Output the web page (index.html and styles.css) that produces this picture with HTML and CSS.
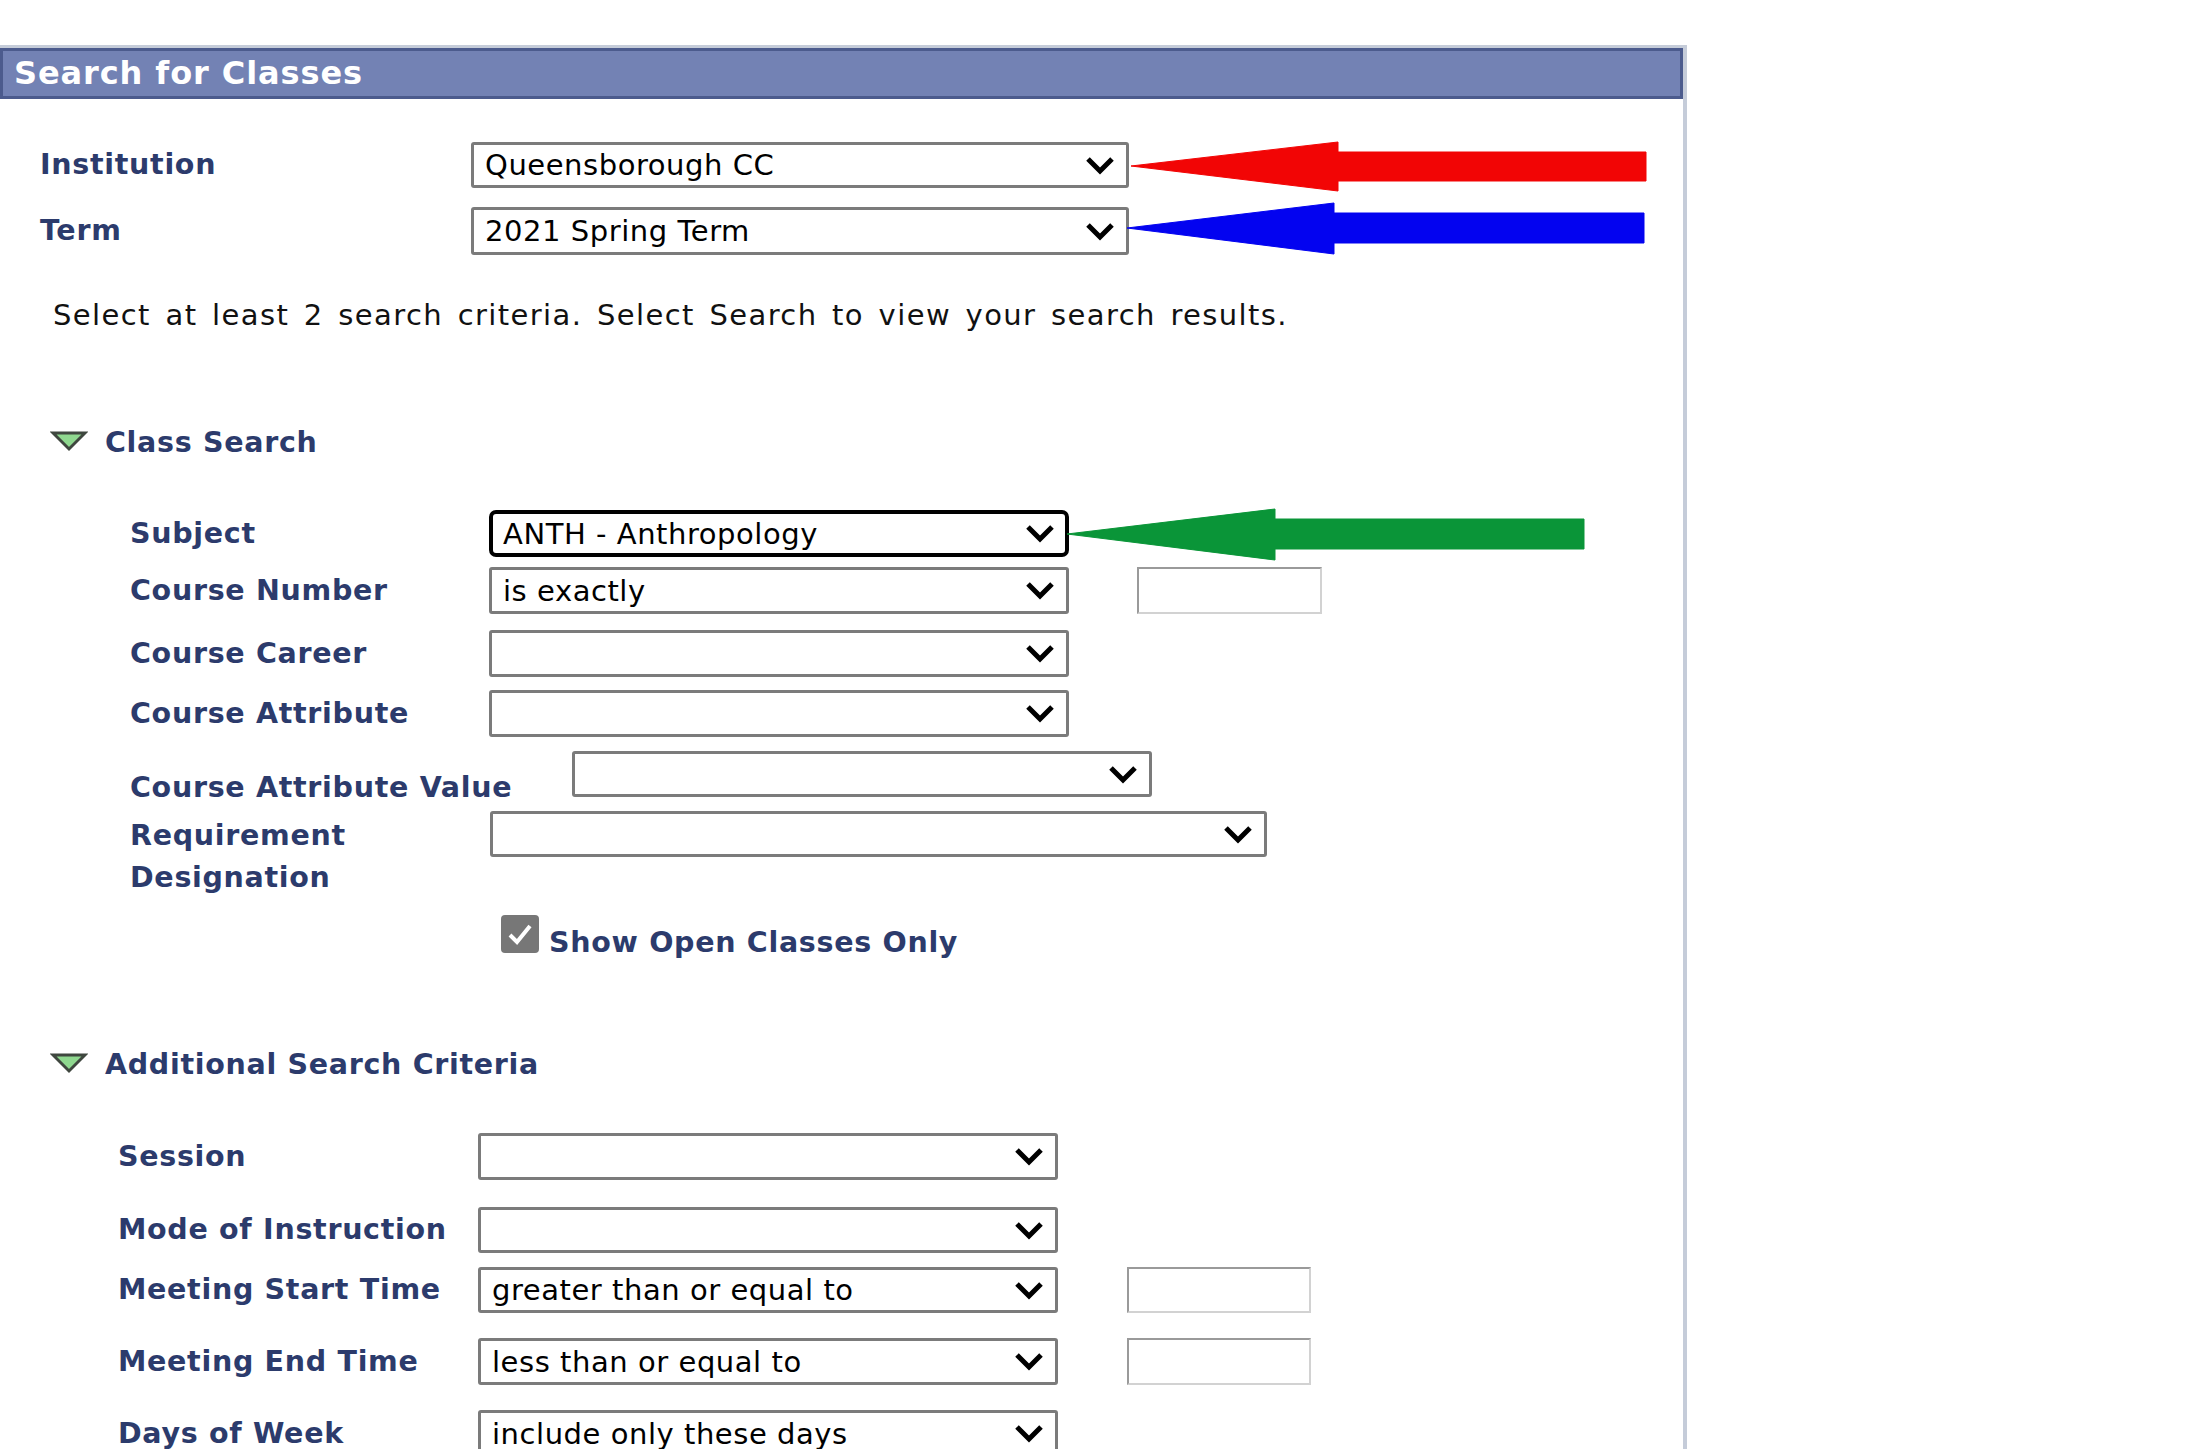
FILE: index.html
```html
<!DOCTYPE html>
<html lang="en">
<head>
<meta charset="utf-8">
<title>Search for Classes</title>
<link rel="stylesheet" href="styles.css">
</head>
<body>
<div class="page">
  <div class="panel">
    <div class="hdr">Search for Classes</div>

    <div class="form-top">
      <div class="row r-inst">
        <span class="lbl">Institution</span>
        <div class="sel sel-wide"><span class="val">Queensborough CC</span><svg class="chev" viewBox="0 0 30 19" width="30" height="19"><polyline points="3,3 15,15 27,3" /></svg></div>
      </div>
      <div class="row r-term">
        <span class="lbl">Term</span>
        <div class="sel sel-wide"><span class="val">2021 Spring Term</span><svg class="chev" viewBox="0 0 30 19" width="30" height="19"><polyline points="3,3 15,15 27,3" /></svg></div>
      </div>
    </div>

    <p class="info">Select at least 2 search criteria. Select Search to view your search results.</p>

    <div class="sec-head sec-class">
      <svg class="tri" viewBox="0 0 38 22" width="38" height="22"><polygon points="3,3 35,3 19,19" /></svg>
      <span>Class Search</span>
    </div>

    <div class="group g1">
      <div class="row r-subj">
        <span class="lbl">Subject</span>
        <div class="sel sel-focus"><span class="val">ANTH - Anthropology</span><svg class="chev" viewBox="0 0 30 19" width="30" height="19"><polyline points="3,3 15,15 27,3" /></svg></div>
      </div>
      <div class="row r-cnum">
        <span class="lbl">Course Number</span>
        <div class="sel"><span class="val">is exactly</span><svg class="chev" viewBox="0 0 30 19" width="30" height="19"><polyline points="3,3 15,15 27,3" /></svg></div>
        <div class="txt txt-1"></div>
      </div>
      <div class="row r-ccar">
        <span class="lbl">Course Career</span>
        <div class="sel"><span class="val"></span><svg class="chev" viewBox="0 0 30 19" width="30" height="19"><polyline points="3,3 15,15 27,3" /></svg></div>
      </div>
      <div class="row r-catt">
        <span class="lbl">Course Attribute</span>
        <div class="sel"><span class="val"></span><svg class="chev" viewBox="0 0 30 19" width="30" height="19"><polyline points="3,3 15,15 27,3" /></svg></div>
      </div>
      <div class="row r-cav">
        <span class="lbl lbl-cav">Course Attribute Value</span>
        <div class="sel"><span class="val"></span><svg class="chev" viewBox="0 0 30 19" width="30" height="19"><polyline points="3,3 15,15 27,3" /></svg></div>
      </div>
      <div class="row r-req">
        <span class="lbl lbl-req">Requirement<br>Designation</span>
        <div class="sel sel-req"><span class="val"></span><svg class="chev" viewBox="0 0 30 19" width="30" height="19"><polyline points="3,3 15,15 27,3" /></svg></div>
      </div>
    </div>

    <div class="chk-row">
      <span class="chk"><svg viewBox="0 0 38 38" width="38" height="38"><polyline points="9,20 16,27 29,11" /></svg></span>
      <span class="chk-lbl">Show Open Classes Only</span>
    </div>

    <div class="sec-head sec-add">
      <svg class="tri" viewBox="0 0 38 22" width="38" height="22"><polygon points="3,3 35,3 19,19" /></svg>
      <span>Additional Search Criteria</span>
    </div>

    <div class="group g2">
      <div class="row r-sess">
        <span class="lbl">Session</span>
        <div class="sel"><span class="val"></span><svg class="chev" viewBox="0 0 30 19" width="30" height="19"><polyline points="3,3 15,15 27,3" /></svg></div>
      </div>
      <div class="row r-mode">
        <span class="lbl">Mode of Instruction</span>
        <div class="sel"><span class="val"></span><svg class="chev" viewBox="0 0 30 19" width="30" height="19"><polyline points="3,3 15,15 27,3" /></svg></div>
      </div>
      <div class="row r-start">
        <span class="lbl">Meeting Start Time</span>
        <div class="sel"><span class="val">greater than or equal to</span><svg class="chev" viewBox="0 0 30 19" width="30" height="19"><polyline points="3,3 15,15 27,3" /></svg></div>
        <div class="txt txt-2"></div>
      </div>
      <div class="row r-end">
        <span class="lbl">Meeting End Time</span>
        <div class="sel"><span class="val">less than or equal to</span><svg class="chev" viewBox="0 0 30 19" width="30" height="19"><polyline points="3,3 15,15 27,3" /></svg></div>
        <div class="txt txt-2"></div>
      </div>
      <div class="row r-days">
        <span class="lbl">Days of Week</span>
        <div class="sel"><span class="val">include only these days</span><svg class="chev" viewBox="0 0 30 19" width="30" height="19"><polyline points="3,3 15,15 27,3" /></svg></div>
      </div>
    </div>
  </div>

  <svg class="annot" viewBox="0 0 2199 1449" width="2199" height="1449">
    <polygon class="a-red" points="1131,166 1338,142 1338,152 1646,152 1646,181 1338,181 1338,191" />
    <polygon class="a-blue" points="1127,228 1334,203 1334,213 1644,213 1644,243 1334,243 1334,254" />
    <polygon class="a-green" points="1067,534 1275,509 1275,519 1584,519 1584,549 1275,549 1275,560" />
  </svg>
</div>
</body>
</html>
```

FILE: styles.css
```css
html, body {
  margin: 0;
  padding: 0;
  background: #ffffff;
  height: 1449px;
  overflow: hidden;
}

body {
  font-family: "DejaVu Sans", Verdana, sans-serif;
  color: #000;
}

.page {
  position: relative;
  box-sizing: border-box;
  width: 2199px;
  height: 1449px;
  padding-top: 45px;
}

.panel {
  width: 1683px;
  height: 1401px;
  border-top: 3px solid #c5ccd9;
  border-right: 4px solid #c5ccd9;
}

.hdr {
  box-sizing: border-box;
  height: 51px;
  border: 3px solid #4c5b8d;
  background: #7382b4;
  color: #ffffff;
  font-weight: bold;
  font-size: 32px;
  line-height: 45px;
  padding-left: 11px;
  letter-spacing: 0.9px;
}

.row {
  display: flex;
  align-items: center;
  height: 47px;
}

.lbl {
  flex: none;
  color: #2c3b6c;
  font-weight: bold;
  font-size: 28.5px;
  line-height: 36px;
  letter-spacing: 0.7px;
  white-space: nowrap;
}

.sel {
  box-sizing: border-box;
  flex: none;
  position: relative;
  display: flex;
  align-items: center;
  width: 580px;
  height: 100%;
  border: 3px solid #7b7b7b;
  border-radius: 3px;
  background: #fff;
  padding-left: 11px;
}

.sel .val {
  flex: 1;
  font-size: 29px;
  line-height: 36px;
  letter-spacing: 0.55px;
  color: #000;
  white-space: nowrap;
}

.chev {
  flex: none;
  margin-right: 11px;
}

.chev polyline {
  fill: none;
  stroke: #000;
  stroke-width: 5;
}

.txt {
  box-sizing: border-box;
  flex: none;
  height: 100%;
  border-top: 2px solid #9a9a9a;
  border-left: 2px solid #9a9a9a;
  border-bottom: 2px solid #d2d2d2;
  border-right: 2px solid #d2d2d2;
  background: #fff;
}

.txt-1 {
  width: 185px;
  margin-left: 68px;
}

.txt-2 {
  width: 184px;
  margin-left: 69px;
}

/* top form */
.form-top {
  padding-left: 40px;
  margin-top: 43px;
}

.form-top .lbl {
  width: 431px;
}

.sel-wide {
  width: 658px;
}

.r-inst {
  height: 46px;
}

.r-term {
  margin-top: 19px;
  height: 48px;
}

.info {
  margin: 42px 0 0 0;
  padding-left: 53px;
  font-size: 29px;
  line-height: 36px;
  letter-spacing: 1.4px;
  word-spacing: 4px;
  color: #111;
}

/* section headings */
.sec-head {
  display: flex;
  align-items: center;
  height: 36px;
  padding-left: 50px;
  color: #2c3b6c;
  font-weight: bold;
  font-size: 28.5px;
  line-height: 36px;
  letter-spacing: 0.7px;
}

.sec-head .tri {
  flex: none;
  margin-right: 17px;
  margin-bottom: 5px;
}

.tri polygon {
  fill: #8fd88f;
  stroke: #3f473f;
  stroke-width: 3;
  stroke-linejoin: miter;
}

.sec-class {
  margin-top: 92px;
}

.sec-add {
  margin-top: 86px;
}

/* group 1 */
.g1 {
  padding-left: 130px;
  margin-top: 49px;
}

.g1 .lbl {
  width: 359px;
}

.sel-focus {
  border: 4px solid #000;
  border-radius: 7px;
  padding-left: 10px;
}

.sel-focus .chev {
  margin-right: 10px;
}

.r-cnum {
  margin-top: 10px;
}

.r-ccar {
  margin-top: 16px;
}

.r-catt {
  margin-top: 13px;
}

.r-cav {
  margin-top: 14px;
  height: 46px;
  align-items: flex-start;
}

.g1 .lbl-cav {
  width: 442px;
  margin-top: 19px;
}

.r-req {
  margin-top: 14px;
  height: 88px;
  align-items: flex-start;
}

.g1 .lbl-req {
  width: 360px;
  line-height: 42px;
  margin-top: 4px;
}

.sel-req {
  width: 777px;
  height: 46px;
}

/* checkbox */
.chk-row {
  display: flex;
  align-items: flex-end;
  height: 46px;
  margin-top: 16px;
  padding-left: 501px;
}

.chk {
  flex: none;
  width: 38px;
  height: 38px;
  border-radius: 4px;
  background: #777777;
  margin-bottom: 8px;
  margin-right: 10px;
}

.chk svg {
  display: block;
}

.chk polyline {
  fill: none;
  stroke: #ffffff;
  stroke-width: 4;
}

.chk-lbl {
  color: #2c3b6c;
  font-weight: bold;
  font-size: 28.5px;
  line-height: 36px;
  letter-spacing: 0.7px;
}

/* group 2 */
.g2 {
  padding-left: 118px;
  margin-top: 50px;
}

.g2 .lbl {
  width: 360px;
}

.r-mode {
  margin-top: 27px;
  height: 46px;
}

.r-start {
  margin-top: 14px;
  height: 46px;
}

.r-end {
  margin-top: 25px;
}

.r-days {
  margin-top: 25px;
}

/* annotation arrows (drawn over the page) */
.annot {
  position: absolute;
  left: 0;
  top: 0;
  pointer-events: none;
}

.a-red {
  fill: #f20505;
  stroke: #f20505;
  stroke-width: 1;
}

.a-blue {
  fill: #0303f0;
  stroke: #0303f0;
  stroke-width: 1;
}

.a-green {
  fill: #0a9538;
  stroke: #0a9538;
  stroke-width: 1;
}
```
